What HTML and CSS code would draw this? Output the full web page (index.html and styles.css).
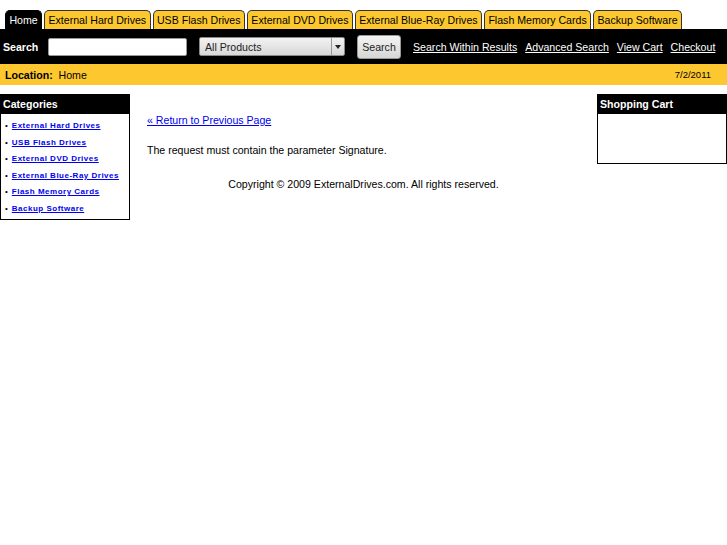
FILE: index.html
```html
<!DOCTYPE html>
<html>
<head>
<title>ExternalDrives.com</title>
<meta http-equiv="Content-Type" content="text/html; charset=utf-8" />
<link rel="stylesheet" href="styles.css">
</head>
<body>
<div class="tabs">
	<a class="tab active" href="#">Home</a>
	<a class="tab" href="#">External Hard Drives</a>
	<a class="tab" href="#">USB Flash Drives</a>
	<a class="tab" href="#">External DVD Drives</a>
	<a class="tab" href="#">External Blue-Ray Drives</a>
	<a class="tab" href="#">Flash Memory Cards</a>
	<a class="tab" href="#">Backup Software</a>
</div>
<div class="searchbar">
	<span class="label">Search</span>
	<input class="searchbox" type="text">
	<div class="select"><span>All Products</span><div class="arrow"></div></div>
	<div class="but">Search</div>
	<a class="toplink first" href="#">Search Within Results</a>
	<a class="toplink" href="#">Advanced Search</a>
	<a class="toplink" href="#">View Cart</a>
	<a class="toplink" href="#">Checkout</a>
</div>
<div class="location">
	<span><b>Location:</b>&nbsp; Home</span>
	<span class="date">7/2/2011</span>
</div>
<div class="main">
	<div class="box left">
		<div class="boxhead">Categories</div>
		<ul class="cats">
			<li><a href="#">External Hard Drives</a></li>
			<li><a href="#">USB Flash Drives</a></li>
			<li><a href="#">External DVD Drives</a></li>
			<li><a href="#">External Blue-Ray Drives</a></li>
			<li><a href="#">Flash Memory Cards</a></li>
			<li><a href="#">Backup Software</a></li>
		</ul>
	</div>
	<div class="content">
		<div class="inner">
			<a class="back" href="#">&laquo; Return to Previous Page</a>
			<p class="msg">The request must contain the parameter Signature.</p>
		</div>
		<p class="copy">Copyright &copy; 2009 ExternalDrives.com. All rights reserved.</p>
	</div>
	<div class="box right">
		<div class="boxhead">Shopping Cart</div>
	</div>
</div>
</body>
</html>
```
FILE: styles.css
```css
body {
	margin: 0;
	font-family: "Liberation Sans", Arial, sans-serif;
	font-size: 10.6px;
	color: #000;
	background: #fff;
}
.tabs {
	display: flex;
	gap: 2px;
	padding: 10px 0 0 5px;
	height: 19px;
	align-items: flex-end;
}
.tab {
	display: block;
	height: 18px;
	line-height: 18px;
	padding: 0 3.4px;
	background-color: #fdc82f;
	border: solid #333 1px;
	border-bottom: none;
	border-radius: 5px 5px 0 0;
	color: #000;
	text-decoration: none;
}
.tab.active {
	background-color: #000;
	border-color: #000;
	color: #fff;
}
.searchbar {
	background: #000;
	height: 35px;
	display: flex;
	align-items: center;
	padding-left: 3px;
}
.label {
	color: #fff;
	font-weight: bold;
	width: 45px;
}
.searchbox {
	width: 137px;
	height: 16px;
	margin: 0;
	padding: 0;
	border: solid #999 1px;
	border-radius: 2px;
	background: #fff;
}
.select {
	margin-left: 12px;
	width: 144px;
	height: 17px;
	border: solid #888 1px;
	border-radius: 2px;
	background: linear-gradient(#f2f2f2, #d8d8d8);
	display: flex;
	align-items: center;
}
.select span {
	padding-left: 5px;
	flex: 1;
	color: #222;
}
.select .arrow {
	width: 12px;
	height: 17px;
	border-left: solid #999 1px;
	position: relative;
}
.select .arrow:after {
	content: '';
	position: absolute;
	left: 3px;
	top: 7px;
	border-left: 3px solid transparent;
	border-right: 3px solid transparent;
	border-top: 4px solid #222;
}
.but {
	margin-left: 12px;
	width: 42px;
	height: 22px;
	line-height: 22px;
	text-align: center;
	border: solid #999 1px;
	border-radius: 3px;
	background: linear-gradient(#f4f4f4, #d6d6d6);
	color: #222;
}
.toplink {
	color: #fff;
	margin-left: 8px;
}
.toplink.first {
	margin-left: 12px;
}
.location {
	background: #fdc82f;
	height: 21px;
	display: flex;
	align-items: center;
	justify-content: space-between;
	padding: 0 16px 0 5px;
}
.date {
	font-size: 9.5px;
}
.main {
	display: flex;
	margin-top: 9px;
	align-items: flex-start;
}
.box {
	width: 128px;
	border: solid #000 1px;
}
.left {
	height: 124px;
}
.right {
	height: 68px;
}
.boxhead {
	background: #000;
	color: #fff;
	font-weight: bold;
	height: 19px;
	line-height: 19px;
	padding-left: 2px;
}
.cats {
	list-style: none;
	margin: 4px 0 0 0;
	padding: 0;
}
.cats li {
	font-size: 8px;
	font-weight: bold;
	height: 16.5px;
	line-height: 16.5px;
	padding-left: 4px;
}
.cats li:before {
	content: '\2022';
	margin-right: 4px;
	font-weight: normal;
}
.cats a {
	color: #0000ee;
	letter-spacing: 0.5px;
}
.content {
	flex: 1;
	padding-top: 20px;
}
.inner {
	padding-left: 17px;
}
.back {
	color: #0000ee;
	display: block;
	line-height: 12px;
}
.msg {
	margin: 18px 0 0 0;
	line-height: 12px;
}
.copy {
	margin: 22px 0 0 0;
	text-align: center;
	line-height: 12px;
}
```
